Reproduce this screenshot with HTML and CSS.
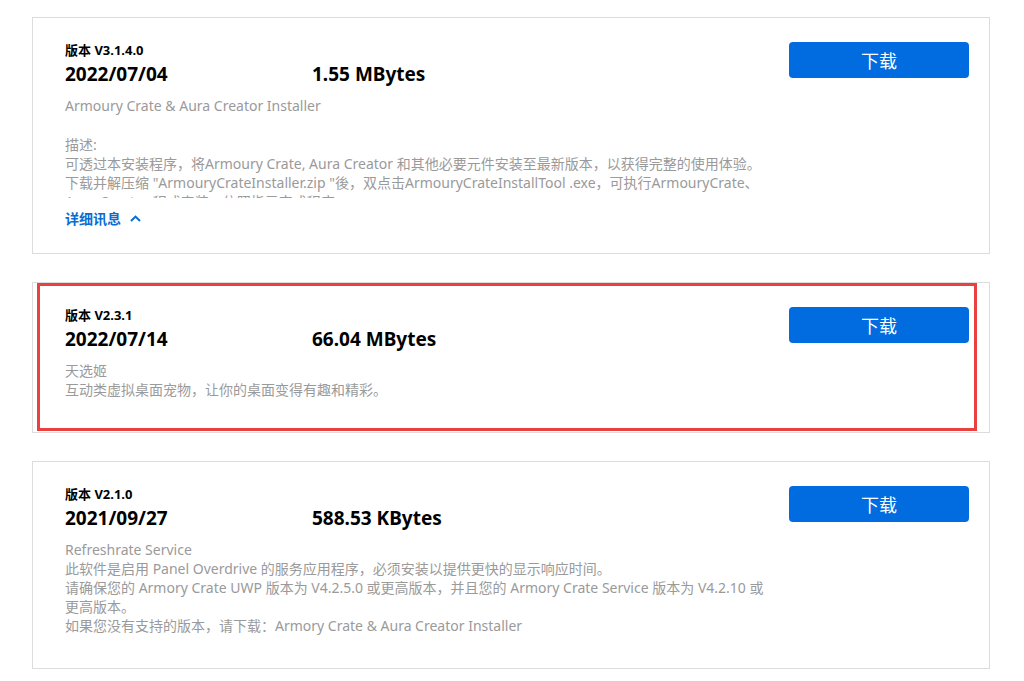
FILE: index.html
```html
<!DOCTYPE html>
<html lang="zh-CN">
<head>
<meta charset="utf-8">
<title>驱动程序与工具软件</title>
<link rel="stylesheet" href="styles.css">
</head>
<body>
<div class="list">
  <div class="card">
    <div class="info">
      <div class="version">版本 V3.1.4.0</div>
      <div class="meta"><span class="date">2022/07/04</span><span class="size">1.55 MBytes</span></div>
      <div class="title">Armoury Crate &amp; Aura Creator Installer</div>
      <div class="desc clipped">
        描述:<br>
        可透过本安装程序，将Armoury Crate, Aura Creator 和其他必要元件安装至最新版本，以获得完整的使用体验。<br>
        下载并解压缩 "ArmouryCrateInstaller.zip "後，双点击ArmouryCrateInstallTool .exe，可执行ArmouryCrate、<br>
        Aura Creator 程式安装，依照指示完成程序。
      </div>
      <a class="more" href="#">详细讯息
        <svg class="chev" width="11" height="7" viewBox="0 0 11 7" aria-hidden="true"><path d="M1 6 L5.5 1.6 L10 6" fill="none" stroke="currentColor" stroke-width="2"/></svg>
      </a>
    </div>
    <a class="btn" href="#">下载</a>
  </div>

  <div class="card highlighted">
    <div class="info">
      <div class="version">版本 V2.3.1</div>
      <div class="meta"><span class="date">2022/07/14</span><span class="size">66.04 MBytes</span></div>
      <div class="desc">
        天选姬<br>
        互动类虚拟桌面宠物，让你的桌面变得有趣和精彩。
      </div>
    </div>
    <a class="btn" href="#">下载</a>
    <div class="mark"></div>
  </div>

  <div class="card">
    <div class="info">
      <div class="version">版本 V2.1.0</div>
      <div class="meta"><span class="date">2021/09/27</span><span class="size">588.53 KBytes</span></div>
      <div class="desc">
        Refreshrate Service<br>
        此软件是启用 Panel Overdrive 的服务应用程序，必须安装以提供更快的显示响应时间。<br>
        请确保您的 Armory Crate UWP 版本为 V4.2.5.0 或更高版本，并且您的 Armory Crate Service 版本为 V4.2.10 或<br>
        更高版本。<br>
        如果您没有支持的版本，请下载：Armory Crate &amp; Aura Creator Installer
      </div>
    </div>
    <a class="btn" href="#">下载</a>
  </div>
</div>
</body>
</html>
```

FILE: styles.css
```css
* { box-sizing: border-box; }

body {
  margin: 0;
  padding: 17px 34px 0 32px;
  background: #fff;
  font-family: "Noto Sans", "Noto Sans CJK SC", sans-serif;
  color: #111;
}

.list {
  display: flex;
  flex-direction: column;
  gap: 28px;
  width: 958px;
}

.card {
  position: relative;
  display: flex;
  align-items: flex-start;
  gap: 8px;
  border: 1px solid #dcdcdc;
  padding: 24px 20px 24px 32px;
}

.info {
  flex: 1;
  min-width: 0;
}

.version {
  font-size: 13px;
  line-height: 16px;
  font-weight: 700;
  color: #000;
}

.meta {
  display: flex;
  margin-top: 4px;
  font-size: 19px;
  line-height: 24px;
  font-weight: 700;
  color: #000;
}

.date { width: 247px; }

.title {
  margin-top: 10px;
  font-size: 14px;
  line-height: 19px;
  color: #9a9a9a;
}

.desc {
  margin-top: 10px;
  margin-bottom: 9px;
  font-size: 14px;
  line-height: 19px;
  color: #9a9a9a;
  white-space: nowrap;
}

.desc.clipped {
  margin-top: 20px;
  margin-bottom: 0;
  height: 63px;
  overflow: hidden;
}

.more {
  display: inline-flex;
  align-items: center;
  gap: 9px;
  margin-top: 11px;
  font-size: 14px;
  line-height: 19px;
  font-weight: 700;
  color: #0a6cd0;
  text-decoration: none;
}

.chev { display: block; }

.btn {
  flex: none;
  width: 180px;
  height: 36px;
  display: flex;
  align-items: center;
  justify-content: center;
  background: #006ce0;
  color: #fff;
  border-radius: 4px;
  font-size: 18px;
  text-decoration: none;
}

.mark {
  position: absolute;
  left: 4px;
  top: 0;
  right: 12px;
  bottom: 1px;
  border: 3px solid #e8413f;
  pointer-events: none;
}
```
